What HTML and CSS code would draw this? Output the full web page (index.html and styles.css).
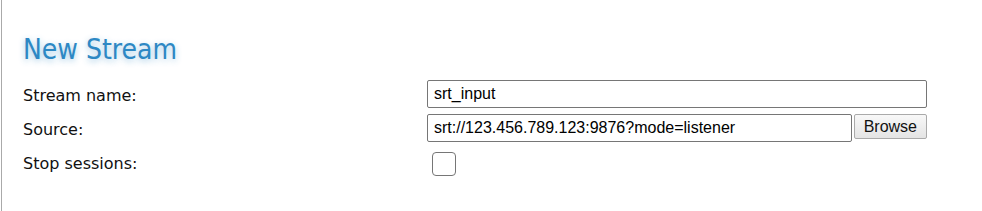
FILE: index.html
```html
<!DOCTYPE html>
<html lang="en">
<head>
    <meta charset="UTF-8">
    <title>New Stream</title>
    <link rel="stylesheet" href="styles.css">
</head>
<body>
    <div class="page">
        <h1>New Stream</h1>

        <div class="form">
            <label for="name">Stream name:</label>
            <div class="field">
                <input type="text" id="name" value="srt_input">
            </div>

            <label for="source">Source:</label>
            <div class="field">
                <input type="text" id="source" class="source" value="srt://123.456.789.123:9876?mode=listener">
                <button class="browse">Browse</button>
            </div>

            <label for="stop">Stop sessions:</label>
            <div class="field">
                <input type="checkbox" id="stop" class="check">
            </div>
        </div>
    </div>
</body>
</html>
```
FILE: styles.css
```css
body {
    margin: 0;
    padding: 0;
    background-color: #fff;
    color: #111;
    font-family: "DejaVu Sans", sans-serif;
}

.page {
    margin-left: 1px;
    border-left: 1px solid #aaa;
    height: 211px;
    box-sizing: border-box;
    padding: 32px 0 0 21px;
}

h1 {
    margin: 0 0 12px 0;
    font-family: "DejaVu Sans Condensed", "DejaVu Sans", sans-serif;
    font-size: 28px;
    font-weight: normal;
    line-height: 36px;
    color: #2d88c4;
    text-shadow: 0 2px 6px rgba(45, 136, 196, 0.45);
}

.form {
    display: grid;
    grid-template-columns: 404px 500px;
    row-gap: 6px;
    align-items: center;
}

label {
    font-size: 16px;
    padding-top: 3px;
}

.field {
    display: flex;
    align-items: flex-start;
    height: 28px;
}

input[type="text"] {
    width: 100%;
    height: 28px;
    box-sizing: border-box;
    padding: 3px 6px;
    border: 1px solid #767676;
    border-radius: 2px;
    font-family: "Liberation Sans", Arial, sans-serif;
    font-size: 16px;
    color: #000;
}

.source {
    flex: 1;
}

.browse {
    height: 25px;
    margin-left: 2px;
    padding: 0 9px;
    border: 1px solid #aaa;
    border-radius: 2px;
    background: linear-gradient(#f8f8f8, #e4e4e4);
    font-family: "Liberation Sans", Arial, sans-serif;
    font-size: 16px;
    color: #111;
}

.check {
    appearance: none;
    width: 24px;
    height: 24px;
    margin: 4px 0 0 5px;
    border: 1px solid #767676;
    border-radius: 4px;
    background: #fff;
}
```
